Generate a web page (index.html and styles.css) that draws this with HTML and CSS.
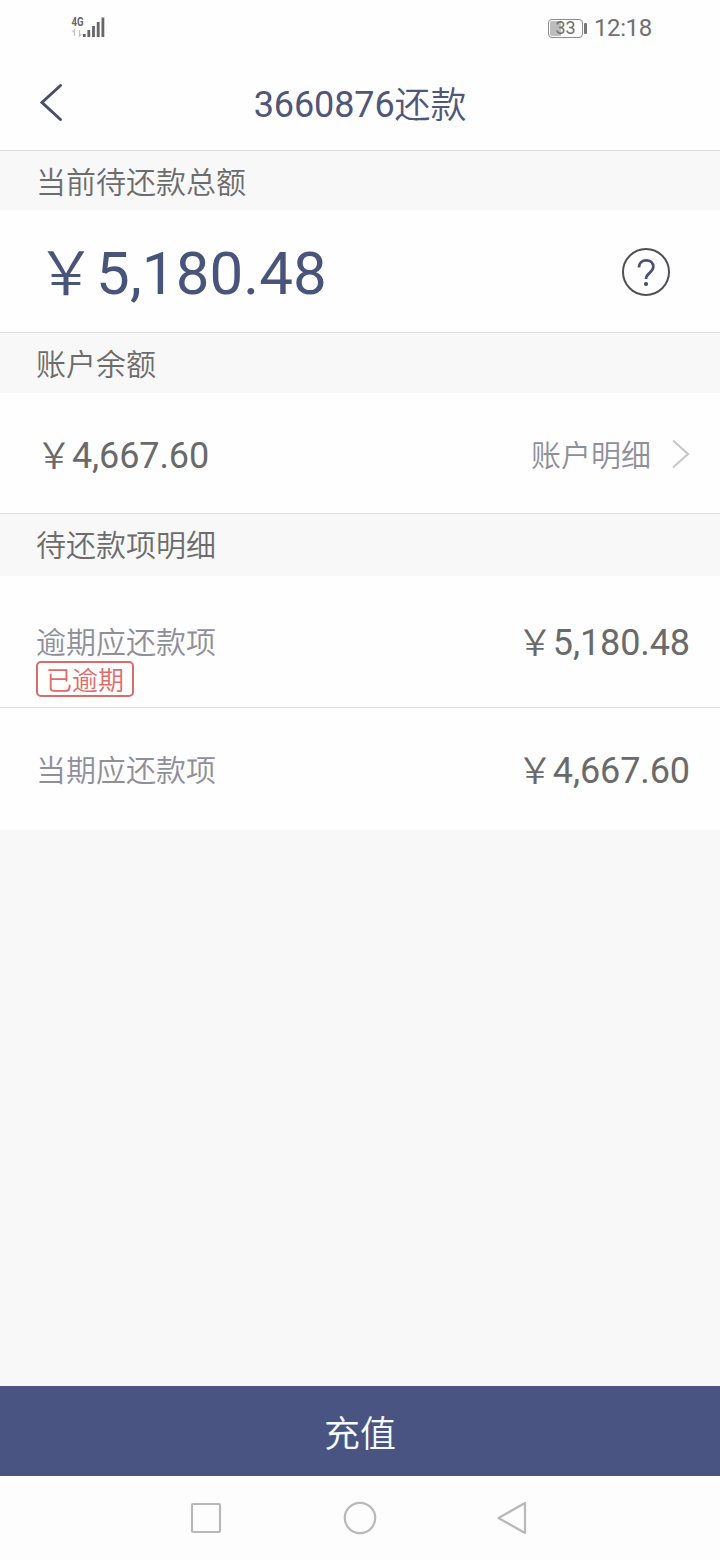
FILE: index.html
```html
<!DOCTYPE html>
<html lang="zh-CN">
<head>
<meta charset="utf-8">
<title>还款</title>
<link rel="stylesheet" href="styles.css">
</head>
<body>
<div class="screen">
  <div class="status">
    <svg class="signal" width="36" height="26" viewBox="0 0 36 26">
      <text class="net" x="1.500" y="12" textLength="12" lengthAdjust="spacingAndGlyphs">4G</text>
      <path d="M4.500 22v-6l-2 2M9.500 16v6l2-2" fill="none" stroke="#c4c4c4" stroke-width="1.200"/>
      <path d="M14.300 23v-3M18.800 23v-7M23.500 23V12M28.200 23V8M32.900 23V3.500" stroke="#666" stroke-width="2.800"/>
    </svg>
    <div class="status-right">
      <div class="battery"><span>33</span></div>
      <i class="battery-tip"></i>
      <span class="clock">12:18</span>
    </div>
  </div>
  <header class="header">
    <svg class="back" width="28" height="40" viewBox="0 0 28 40"><path d="M24.500 2.500 6 19.500l18.500 17" fill="none" stroke="#4b4e6b" stroke-width="3" stroke-linecap="round" stroke-linejoin="miter"/></svg>
    <h1 class="title">3660876<span class="title-word">还款</span></h1>
  </header>
  <h2 class="section">当前待还款总额</h2>
  <div class="row row-total">
    <span class="total"><span class="yen">￥</span>5,180.48</span>
    <svg class="help" width="50" height="50" viewBox="0 0 50 50" fill="none"><circle cx="25" cy="25" r="23" stroke="#505057" stroke-width="2"/><path d="M18 20.500c0-4.600 3-7.200 7.200-7.200s7.100 2.500 7.100 6.500c0 6-7.300 6.200-7.300 12.300" stroke="#4d5074" stroke-width="2.700"/><circle cx="25" cy="37" r="2.100" fill="#4a4b5c"/></svg>
  </div>
  <h2 class="section section-balance">账户余额</h2>
  <div class="row row-balance">
    <span class="amount"><span class="yen">￥</span>4,667.60</span>
    <div class="link"><span class="label">账户明细</span><svg class="chevron" width="20" height="32" viewBox="0 0 20 32"><path d="m3 2.500 15 13.500L3 29.500" fill="none" stroke="#c8c8c8" stroke-width="2.200"/></svg></div>
  </div>
  <h2 class="section section-items">待还款项明细</h2>
  <div class="row row-overdue">
    <div class="item"><span class="label">逾期应还款项</span><span class="tag">已逾期</span></div>
    <span class="amount"><span class="yen">￥</span>5,180.48</span>
  </div>
  <div class="row row-current">
    <span class="label">当期应还款项</span>
    <span class="amount"><span class="yen">￥</span>4,667.60</span>
  </div>
  <button class="recharge">充值</button>
  <nav class="nav">
    <svg width="34" height="36" viewBox="0 0 34 36"><rect x="3" y="4" width="28" height="28" rx="1"/></svg>
    <svg width="34" height="36" viewBox="0 0 34 36"><circle cx="17" cy="18" r="15.200"/></svg>
    <svg width="34" height="36" viewBox="0 0 34 36"><path d="M28 3v30L1.500 18Z" stroke-linejoin="round"/></svg>
  </nav>
</div>
</body>
</html>
```
FILE: styles.css
```css
* { box-sizing: border-box; }
body {
  margin: 0;
  background: #f8f8f8;
  font-family: Roboto, "Noto Sans CJK SC", sans-serif;
}
svg { display: block; flex: none; }
.screen {
  display: flex;
  flex-direction: column;
  width: 720px;
  height: 1560px;
  overflow: hidden;
}
.status {
  display: flex;
  justify-content: space-between;
  height: 56px;
  padding: 14px 68px 0 70px;
  background: #fefefe;
}
.net { font: 700 12px Roboto, sans-serif; fill: #666; }
.status-right { display: flex; align-items: center; height: 28px; color: #707070; }
.battery {
  display: flex;
  align-items: center;
  justify-content: center;
  width: 35px;
  height: 19px;
  border: 1.5px solid #8b8b8b;
  border-radius: 4px;
  background: linear-gradient(to right, #bdbdbd 11px, #fefefe 11px) content-box;
  padding: 1px;
  font-size: 18px;
  line-height: 16px;
}
.battery-tip { width: 3px; height: 11px; margin: 0 7px 0 1px; background: #777; border-radius: 1px; }
.clock { font-size: 24px; width: 58px; line-height: 28px; white-space: nowrap; letter-spacing: -0.4px; }
.header {
  display: grid;
  grid-template-columns: 80px 1fr 80px;
  align-items: center;
  height: 94px;
  background: #fefefe;
}
.back { margin-left: 36px; }
.title {
  margin: 0;
  padding-top: 3px;
  color: #50557a;
  font-size: 36px;
  line-height: 44px;
  font-weight: 400;
  letter-spacing: -0.1px;
  text-align: center;
}
.title-word { font-weight: 350; line-height: 1; vertical-align: -1px; }
.section {
  height: 60px;
  margin: 0;
  padding-left: 36px;
  border-top: 1px solid #dedede;
  background: #f8f8f8;
  color: #6c6c6c;
  font: 350 30px/59px "Noto Sans CJK SC", sans-serif;
}
.section-balance { height: 61px; }
.section-items { height: 63px; }
.row {
  display: flex;
  justify-content: space-between;
  align-items: center;
  padding: 0 30px 0 36px;
  background: #fefefe;
}
.row-total { height: 122px; padding-right: 49px; }
.total { color: #48547a; font-size: 60px; line-height: 70px; padding-top: 6px; letter-spacing: 0.1px; }
.help { margin-top: 2px; }
.yen { font-family: "Noto Sans CJK SC", sans-serif; font-weight: 350; line-height: 1; vertical-align: -1px; }
.row-balance { height: 120px; padding-top: 2px; }
.chevron { margin-top: -1px; }
.amount { color: #6a6a6a; font-size: 36px; line-height: 44px; padding-top: 4px; letter-spacing: -0.1px; }
.label { color: #8f8f9c; font: 350 30px/40px "Noto Sans CJK SC", sans-serif; }
.row-balance .label { margin-top: -2px; }
.link { display: flex; align-items: center; gap: 19px; }
.row-overdue { height: 132px; border-bottom: 1px solid #dedede; }
.row-overdue .amount { margin-top: -2px; }
.item { display: flex; flex-direction: column; align-items: flex-start; padding-top: 33px; }
.tag {
  width: 98px;
  height: 36px;
  margin-top: 1px;
  border: 2px solid #d86b6b;
  border-radius: 5px;
  color: #de6c6c;
  font: 350 26px/32px "Noto Sans CJK SC", sans-serif;
  text-align: center;
}
.row-current { height: 122px; }
.row-current .label { margin-top: -2px; }
.recharge {
  height: 90px;
  margin-top: auto;
  padding: 0;
  border: 0;
  background: #4a5483;
  color: #f4fcff;
  font: 350 36px/44px "Noto Sans CJK SC", sans-serif;
}
.nav {
  display: flex;
  justify-content: center;
  gap: 120px;
  height: 84px;
  padding-top: 24px;
  background: #fdfdfd;
}
.nav svg { fill: none; stroke: #b8b8b8; stroke-width: 2.2; }
```
